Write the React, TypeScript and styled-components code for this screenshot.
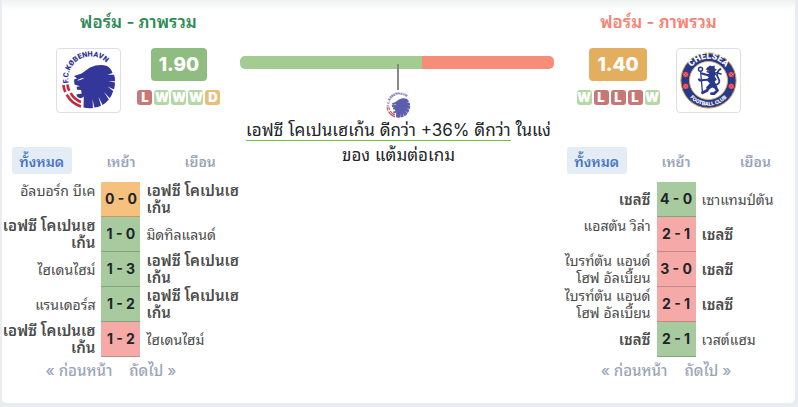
import React from "react";
import styled, { createGlobalStyle } from "styled-components";

const Global = createGlobalStyle`
  *, *::before, *::after { box-sizing: border-box; }
  body {
    margin: 0;
    background: #e9edf2;
    font-family: Inter, "Noto Sans Thai Looped", "Noto Sans Thai", "Noto Sans", sans-serif;
    color: #212529;
  }
  button { font: inherit; border: 0; background: none; padding: 0; cursor: pointer; }
`;

type Result = "W" | "D" | "L";

const Card = styled.main`
  display: grid;
  grid-template-columns: 3fr 4fr 3fr;
  margin: 0 3px 4px 2px;
  padding-bottom: 22px;
  background: linear-gradient(#f0f2f2, #ffffff 10px);
  border-radius: 0 0 5px 5px;
`;

const Panel = styled.section`
  min-width: 0;
`;

const Summary = styled.header<{ $side: "left" | "right" }>`
  display: flex;
  flex-direction: column;
  align-items: center;
  height: 147px;
  padding-top: 10px;
  padding-left: ${(p) => (p.$side === "left" ? "35px" : "0")};
  padding-right: ${(p) => (p.$side === "right" ? "35px" : "0")};
`;

const Title = styled.h2<{ $color: string }>`
  margin: 0 0 14px;
  font-size: 17px;
  line-height: 24px;
  font-weight: 600;
  white-space: nowrap;
  color: ${(p) => p.$color};
`;

const TeamForm = styled.div<{ $reverse?: boolean }>`
  display: flex;
  flex-direction: ${(p) => (p.$reverse ? "row-reverse" : "row")};
  gap: 16px;
`;

const LogoBox = styled.div`
  display: flex;
  align-items: center;
  justify-content: center;
  width: 65px;
  height: 65px;
  border: 1px solid #dcdfea;
  border-radius: 4px;
`;

const Ratings = styled.div`
  display: flex;
  flex-direction: column;
  align-items: center;
  gap: 9px;
`;

const Rating = styled.div<{ $color: string }>`
  padding: 0 8px;
  border-radius: 4px;
  font-size: 19px;
  line-height: 33px;
  font-weight: 800;
  color: #fff;
  background: ${(p) => p.$color};
`;

const FormList = styled.ul`
  display: flex;
  gap: 2px;
  margin: 0;
  padding: 0;
  list-style: none;
`;

const formColors: Record<Result, string> = { W: "#b5d7a5", D: "#e9bd7c", L: "#c87777" };

const FormItem = styled.li<{ $result: Result }>`
  display: flex;
  justify-content: center;
  width: 15px;
  border-radius: 3px;
  font-size: 13px;
  line-height: 15px;
  font-weight: 900;
  color: #fff;
  background: ${(p) => formColors[p.$result]};
`;

const Tabs = styled.div`
  display: grid;
  grid-template-columns: repeat(3, 1fr);
  justify-items: center;
  margin-bottom: 8px;
`;

const Tab = styled.button<{ $active?: boolean }>`
  && {
    width: 60px;
    height: 27px;
    border-radius: 3px;
    font-size: 14px;
    font-weight: 600;
    white-space: nowrap;
    color: ${(p) => (p.$active ? "#4a76c0" : "#99a4b8")};
    background: ${(p) => (p.$active ? "#e4ecf6" : "transparent")};
  }
`;

const Matches = styled.table`
  width: 100%;
  table-layout: fixed;
  border-collapse: separate;
  border-spacing: 0;
`;

const ScoreCol = styled.col`
  width: 39px;
`;

const TeamCell = styled.td<{ $home?: boolean; $bold?: boolean; $top?: boolean }>`
  height: 35px;
  padding: ${(p) => (p.$home ? "0 6px 1px 0" : "0 0 1px 6px")};
  text-align: ${(p) => (p.$home ? "right" : "left")};
  vertical-align: ${(p) => (p.$top ? "top" : "middle")};
  font-size: ${(p) => (p.$bold ? "15px" : "14px")};
  line-height: 17px;
  font-weight: ${(p) => (p.$bold ? 600 : 400)};
  white-space: nowrap;
  color: #4b4b4b;
`;

const scoreColors: Record<Result, string> = { W: "#a7cb9f", D: "#f6c07e", L: "#f6aaa8" };

const ScoreCell = styled.td<{ $result: Result }>`
  padding: 0;
  border-bottom: 1px solid rgba(0, 0, 0, 0.2);
  background: ${(p) => scoreColors[p.$result]};
  text-align: center;
  font-size: 14px;
  line-height: 34px;
  font-weight: 700;
  white-space: nowrap;
`;

const Pager = styled.nav`
  display: flex;
  justify-content: center;
  gap: 17px;
  padding-right: 20px;
  margin-top: 4px;
  height: 20px;
`;

const PageButton = styled.button`
  && {
    font-size: 15px;
    line-height: 20px;
    font-weight: 500;
    white-space: nowrap;
    color: #99a4b8;
  }
`;

const Comparison = styled.section`
  display: flex;
  flex-direction: column;
  align-items: center;
  padding-top: 56px;
`;

const Track = styled.div`
  position: relative;
  display: flex;
  align-self: stretch;
  height: 13px;
  margin-right: 3px;
  border-radius: 5px;
  background: linear-gradient(to right, #a2cc91 58%, #f58d79 58%);
`;

const Marker = styled.span`
  position: absolute;
  top: 8px;
  left: 50%;
  width: 2px;
  height: 26px;
  background: #888;
`;

const MiniLogo = styled.div`
  height: 25px;
  margin-top: 24px;
  opacity: 0.8;
`;

const Verdict = styled.p`
  margin: 0;
  font-size: 17px;
  line-height: 25px;
  text-align: center;
  white-space: nowrap;
`;

const Lead = styled.span`
  border-bottom: 1px solid #6fbf44;
`;

const Crest = styled.svg`
  display: block;
  overflow: visible;
`;

function CopenhagenLogo({ size, id }: { size: number; id: string }) {
  return (
    <Crest width={size} height={size} viewBox="0 0 56 56" role="img" aria-label="F.C. København">
      <defs>
        <path id={id} d="M7.5 30 A22.5 22.5 0 0 1 52 22" />
      </defs>
      <text fontFamily="Roboto, sans-serif" fontSize="7.4" fontWeight="900" fill="#343799">
        <textPath href={`#${id}`}>F.C.KØBENHAVN</textPath>
      </text>
      <g fill="none" stroke="#c8283c" strokeWidth="2.6">
        <path d="M2.4 32 Q2.8 36 4.3 39" />
        <path d="M6.4 31.5 Q6.8 34.8 8.2 37.8" />
        <path d="M5.7 41.6 Q10.5 50.5 20 53.4" />
        <path d="M9.7 40.2 Q13.2 46.4 20 49" />
      </g>
      <path
        fill="#343799"
        d="M29 14.5 Q38 10.5 46 13 Q50 15 51.5 20 L46.5 21.8 L53 21.8 Q54.3 25 54 28.3 L47.5 28 L54 29.6 Q54 34 53 36.5 L46.5 33.4 L52.2 38 Q51 42 48.8 45.2 L43 39 L47.8 46.5 Q45 50 41.5 52 L37.5 43.5 L40 52.8 Q37 54.2 33.3 54.6 L31.5 46 L32 55 Q27 55.6 22.5 54.5 L22.8 43.5 Q20 46.5 16.5 44 L15.2 41.5 L20.8 40.6 L20 37 L16 36.8 L15.6 33.8 L19 33.2 L13.5 31.5 L13 26.5 L16 25.5 L13 23 L20.5 20.5 Z"
      />
      <path fill="#fff" d="M16 27.2 Q20 25.2 23.8 24.8 Q20.8 26.8 17.2 27.6Z M15.8 37.5 L20 39.8 L16.2 40.7Z" />
    </Crest>
  );
}

function Rose({ x, y }: { x: number; y: number }) {
  return (
    <g transform={`translate(${x} ${y})`}>
      <circle r="2.8" fill="#ef3d50" />
      <path d="M-2 0H2M0-2V2" stroke="#f7a5ad" strokeWidth="0.7" />
      <circle r="0.8" fill="#d31c35" />
    </g>
  );
}

function ChelseaLogo() {
  return (
    <Crest width="57" height="57" viewBox="0 0 57 57" role="img" aria-label="Chelsea Football Club">
      <defs>
        <path id="chelsea-top" d="M9.5 18.8 A21 21 0 0 1 47.5 18.8" />
        <path id="chelsea-bottom" d="M8 43 A25 25 0 0 0 49 43" />
      </defs>
      <circle cx="28.5" cy="28.5" r="27.6" fill="#28398c" stroke="#c5a34d" strokeWidth="1" />
      <circle cx="28.5" cy="28.5" r="19" fill="#fff" stroke="#d8bd73" strokeWidth="1" />
      <g fill="#fff" fontFamily="Roboto, sans-serif" fontWeight="900" textAnchor="middle">
        <text fontSize="9">
          <textPath href="#chelsea-top" startOffset="50%">CHELSEA</textPath>
        </text>
        <text fontSize="5.4">
          <textPath href="#chelsea-bottom" startOffset="50%">FOOTBALL CLUB</textPath>
        </text>
      </g>
      <Rose x={5.7} y={22.5} />
      <Rose x={5.7} y={34.3} />
      <Rose x={51.3} y={22.5} />
      <Rose x={51.3} y={34.3} />
      <g fill="none" stroke="#28398c" strokeLinecap="round" strokeLinejoin="round">
        <circle cx="20.5" cy="17.3" r="2" strokeWidth="1.5" />
        <path d="M20.6 19.5 L22.5 41" strokeWidth="1.3" />
        <path d="M29 23.5 L22 21.5 M28.5 27.5 L20 28.5 L19 27.5" strokeWidth="2.2" />
        <path d="M34.5 33 Q41.5 32 38.5 26.5 Q35.6 22.5 38.6 18.5 L40.5 17" strokeWidth="1.8" />
        <path d="M36 20.5 L41 22" strokeWidth="1.5" />
        <path d="M29 35 L27 38.5 L22.5 40.8 M35 34.5 L37.5 38.5 L34 41.7 L31.5 41.7" strokeWidth="2.8" />
      </g>
      <path
        fill="#28398c"
        d="M27.5 15.2 L30 13.5 L32 14.2 L34.7 13.4 L34.7 16.4 L37 17.6 L34.8 19.3 L36.3 22.2 L34.6 24.2 L36.8 27.8 L34.6 29.5 L37.4 35 L36.4 37.3 L32.2 35.5 L28.2 38 L26 35.4 L29.8 31.2 L26.6 28.2 L28.7 25.6 L26.7 22.8 L29.5 21.3 L26 20 L28.5 18.2 L25.6 17.4 Z"
      />
      <path d="M27 18.6 L29.2 19" stroke="#e5444f" strokeWidth="1.2" />
    </Crest>
  );
}

interface Team {
  lines: string[];
  bold?: boolean;
  top?: boolean;
}
interface Match {
  home: Team;
  away: Team;
  score: string;
  result: Result;
}

const fck: Team = { lines: ["เอฟซี โคเปนเฮ", "เก้น"], bold: true };
const chelsea: Team = { lines: ["เชลซี"], bold: true };
const brighton: Team = { lines: ["ไบรท์ตัน แอนด์", "โฮฟ อัลเบี้ยน"] };

const leftMatches: Match[] = [
  { home: { lines: ["อัลบอร์ก บีเค"], top: true }, away: fck, score: "0 - 0", result: "D" },
  { home: fck, away: { lines: ["มิดทิลแลนด์"] }, score: "1 - 0", result: "W" },
  { home: { lines: ["ไฮเดนไฮม์"] }, away: fck, score: "1 - 3", result: "W" },
  { home: { lines: ["แรนเดอร์ส"] }, away: fck, score: "1 - 2", result: "W" },
  { home: fck, away: { lines: ["ไฮเดนไฮม์"] }, score: "1 - 2", result: "L" },
];

const rightMatches: Match[] = [
  { home: chelsea, away: { lines: ["เซาแทมป์ตัน"] }, score: "4 - 0", result: "W" },
  { home: { lines: ["แอสตัน วิล่า"], top: true }, away: chelsea, score: "2 - 1", result: "L" },
  { home: brighton, away: chelsea, score: "3 - 0", result: "L" },
  { home: brighton, away: chelsea, score: "2 - 1", result: "L" },
  { home: chelsea, away: { lines: ["เวสต์แฮม"] }, score: "2 - 1", result: "W" },
];

function TeamName({ team, home }: { team: Team; home?: boolean }) {
  return (
    <TeamCell $home={home} $bold={team.bold} $top={team.top}>
      {team.lines.map((line, i) => (
        <React.Fragment key={line}>
          {i > 0 && <br />}
          {line}
        </React.Fragment>
      ))}
    </TeamCell>
  );
}

interface FormPanelProps {
  side: "left" | "right";
  color: string;
  logo: React.ReactNode;
  rating: string;
  ratingColor: string;
  form: Result[];
  matches: Match[];
}

function FormPanel({ side, color, logo, rating, ratingColor, form, matches }: FormPanelProps) {
  return (
    <Panel>
      <Summary $side={side}>
        <Title $color={color}>ฟอร์ม - ภาพรวม</Title>
        <TeamForm $reverse={side === "right"}>
          <LogoBox>{logo}</LogoBox>
          <Ratings>
            <Rating $color={ratingColor}>{rating}</Rating>
            <FormList>
              {form.map((r, i) => (
                <FormItem key={i} $result={r}>{r}</FormItem>
              ))}
            </FormList>
          </Ratings>
        </TeamForm>
      </Summary>
      <Tabs>
        <Tab $active>ทั้งหมด</Tab>
        <Tab>เหย้า</Tab>
        <Tab>เยือน</Tab>
      </Tabs>
      <Matches>
        <colgroup>
          <col />
          <ScoreCol />
          <col />
        </colgroup>
        <tbody>
          {matches.map((m, i) => (
            <tr key={i}>
              <TeamName team={m.home} home />
              <ScoreCell $result={m.result}>{m.score}</ScoreCell>
              <TeamName team={m.away} />
            </tr>
          ))}
        </tbody>
      </Matches>
      <Pager>
        <PageButton>« ก่อนหน้า</PageButton>
        <PageButton>ถัดไป »</PageButton>
      </Pager>
    </Panel>
  );
}

export default function App() {
  return (
    <>
      <Global />
      <Card>
        <FormPanel
          side="left"
          color="#2e8b57"
          logo={<CopenhagenLogo size={56} id="fck-arc" />}
          rating="1.90"
          ratingColor="#8fbc80"
          form={["L", "W", "W", "W", "D"]}
          matches={leftMatches}
        />
        <Comparison>
          <Track>
            <Marker />
          </Track>
          <MiniLogo>
            <CopenhagenLogo size={25} id="fck-arc-small" />
          </MiniLogo>
          <Verdict>
            <Lead>เอฟซี โคเปนเฮเก้น ดีกว่า +36% ดีกว่า</Lead> ในแง่
            <br />
            ของ แต้มต่อเกม
          </Verdict>
        </Comparison>
        <FormPanel
          side="right"
          color="#fa8072"
          logo={<ChelseaLogo />}
          rating="1.40"
          ratingColor="#e3af5f"
          form={["W", "L", "L", "L", "W"]}
          matches={rightMatches}
        />
      </Card>
    </>
  );
}
